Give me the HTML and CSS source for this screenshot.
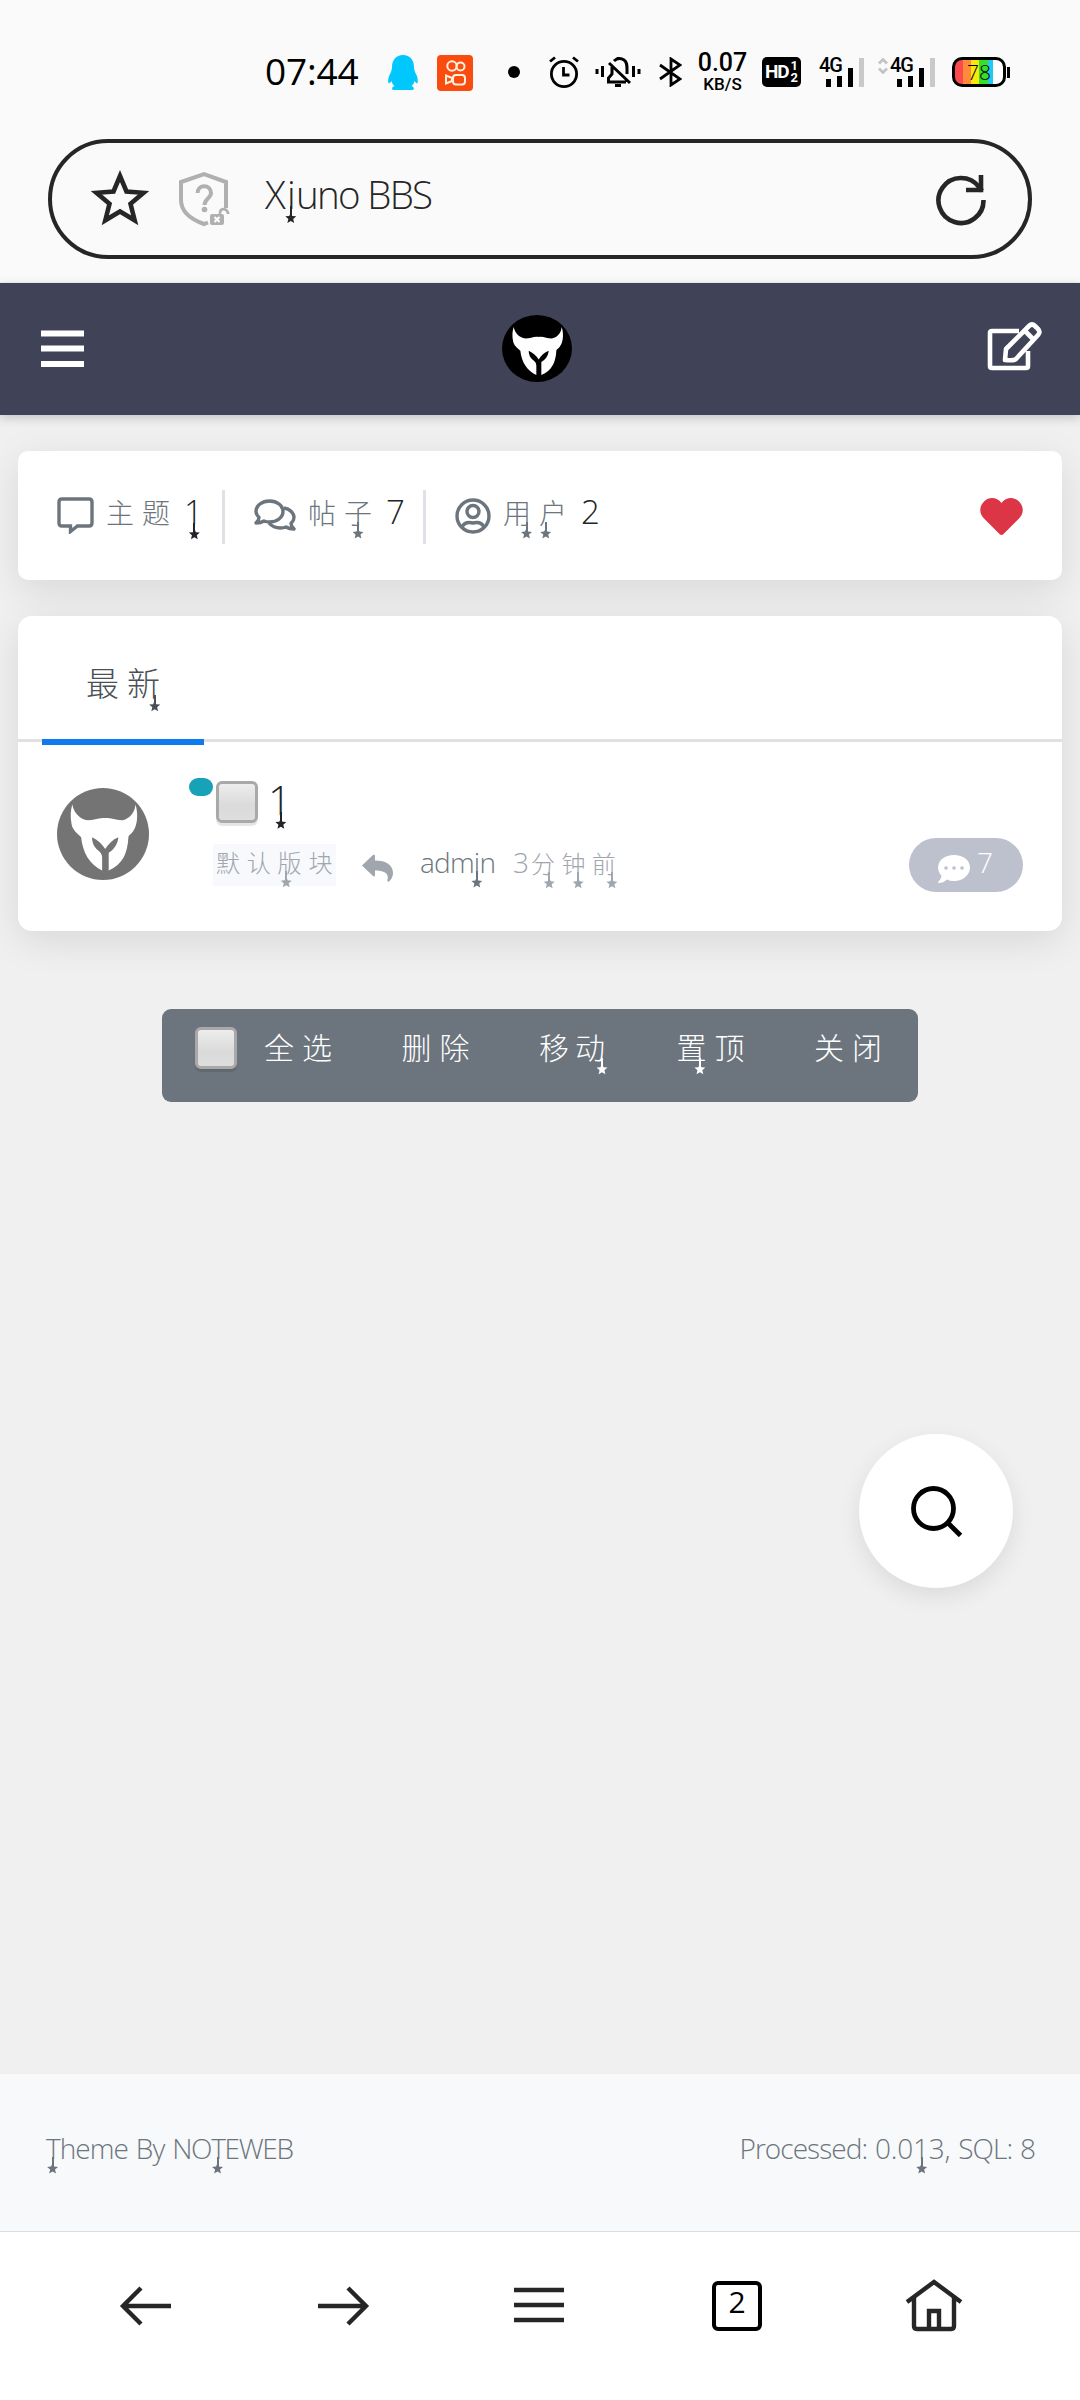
FILE: index.html
```html
<!DOCTYPE html>
<html lang="zh-CN">
<head>
<meta charset="utf-8">
<title>Xiuno BBS</title>
<link rel="stylesheet" href="styles.css">
</head>
<body>
<svg class="defs" width="0" height="0">
  <symbol id="mask" viewBox="65 72 210 202" preserveAspectRatio="none">
    <ellipse cx="170" cy="173" rx="105" ry="101"/>
    <path fill="#fff" d="M100 108C104 128 118 140 135 143C150 143 160 136 175 138C190 136 200 143 215 143C232 138 243 125 244 108C250 125 250 150 240 165C236 173 228 176 228 180C226 215 215 240 183 253L183 214C195 207 204 195 205 180C192 185 182 195 175 206C168 195 158 186 145 180C145 192 150 202 158 208Q168 215 168 225L168 253C140 240 124 215 120 180C112 172 100 165 98 150C95 135 96 120 100 108Z"/>
  </symbol>
</svg>

<header class="status">
  <span class="clock">07:44</span>
  <svg class="qq" width="30" height="35" viewBox="0 0 30 35"><path fill="#00c8ff" d="M15 0C8 0 4 5 4 12c0 3-1 5-2.500 8C0 23 0 27 .5 28c1 1 2-1 3-2 .5 2 1.500 4 3 5-3 1-3 4-1 4h19c2 0 2-3-1-4 1.500-1 2.500-3 3-5 1 1 2 3 3 2 .5-1 .5-5-1-8C27 17 26 15 26 12 26 5 22 0 15 0z"/></svg>
  <svg class="ks" width="36" height="36" viewBox="0 0 36 36"><rect width="36" height="36" rx="4" fill="#fb4c10"/><g fill="none" stroke="#fff0e0" stroke-width="2"><circle cx="15" cy="11" r="4.700"/><circle cx="23.500" cy="11.500" r="4"/><rect x="16" y="20" width="12" height="9.500" rx="3"/><path d="M15 23l-6-2.500v8l6-2.500z"/></g></svg>
  <i class="dot"></i>
  <svg class="alarm" width="30" height="32" viewBox="0 0 30 32"><g fill="none" stroke="#000" stroke-width="2.800"><circle cx="15" cy="18" r="12.600"/><path d="M1 5.500L6 1.500M29 5.500L24 1.500M14.500 11v8h6"/></g></svg>
  <svg class="bell" width="46" height="32" viewBox="0 0 46 32"><g fill="none" stroke="#000" stroke-width="3"><path d="M2 13v5M7.500 10v11M44 13v5M38.500 10v11M14 7l21 20M12 26h19M13.500 26v-4l3.500-4v-7M19 5c3-3 7-3 10-1 3 2 3 5 3 9v5M23 1v3"/><path d="M20 29.500h6"/></g></svg>
  <svg class="bt" width="23" height="30" viewBox="0 0 23 30"><path d="M1 8l20 14-9 6V2l9 6L1 22" fill="none" stroke="#000" stroke-width="2.800"/></svg>
  <div class="speed"><b>0.07</b><b class="unit">KB/S</b></div>
  <div class="hd"><span>HD</span><span class="frac"><i>1</i><i>2</i></span></div>
  <div class="sig"><b>4G</b><svg width="39" height="31" viewBox="0 0 39 31"><path d="M3.500 22v8M14.500 19v11M25.500 11v19" stroke="#000" stroke-width="5"/><path d="M36.500 1v29" stroke="#c9c9c9" stroke-width="5"/></svg></div>
  <svg class="updown" width="10" height="16" viewBox="0 0 10 16"><path d="M1 5.500l4-4 4 4M1 10.500l4 4 4-4" fill="none" stroke="#c4c4c4" stroke-width="2.800"/></svg>
  <div class="sig sig2"><b>4G</b><svg width="39" height="31" viewBox="0 0 39 31"><path d="M3.500 22v8M14.500 19v11M25.500 11v19" stroke="#000" stroke-width="5"/><path d="M36.500 1v29" stroke="#c9c9c9" stroke-width="5"/></svg></div>
  <div class="battery"><span>78</span></div><i class="nub"></i>
</header>

<div class="address">
  <svg class="fav" width="58" height="56" viewBox="0 0 58 56"><path d="M29 6l6.500 15.500 17 1.300-13 11 4.200 16.500L29 41.500 14.300 50.300l4.200-16.500-13-11 17-1.300z" fill="none" stroke="#262626" stroke-width="4.600"/></svg>
  <svg class="shield" width="52" height="56" viewBox="0 0 52 56"><g fill="none" stroke="#b0b0b0" stroke-width="4"><path d="M48 37V11L26 3 3 11v18c0 12 9 19 23 24l4-1.500"/><path d="M19.500 22c0-9 13.500-9 13.500 0 0 5-6.500 6-6.500 12"/><path stroke-width="2.800" d="M42 43c-1-7 8-6 8 0"/></g><circle cx="26.500" cy="38.500" r="2.800" fill="#b0b0b0"/><rect x="32" y="43" width="14" height="11" rx="2" fill="#b0b0b0"/><path d="M36.500 46l5 5m0-5l-5 5" stroke="#fff" stroke-width="2"/></svg>
  <span class="title">X<span class="drop m-i">i</span>uno BBS</span>
  <svg class="reload" width="52" height="52" viewBox="0 0 52 52"><g fill="none" stroke="#262626" stroke-width="4.600"><path d="M47.500 26A22.500 22.500 0 1 1 43 13l3 4"/><path d="M30 16h15V1"/></g></svg>
</div>

<nav class="navbar">
  <svg width="44" height="39" viewBox="0 0 44 39"><path d="M0 3.500h43M0 18.500h43M0 34h43" stroke="#fff" stroke-width="6"/></svg>
  <svg class="logo" width="70" height="67"><use href="#mask"/></svg>
  <svg class="edit" width="56" height="50" viewBox="0 0 56 50"><g fill="none" stroke="#fff" stroke-width="4.600" stroke-linejoin="round"><path d="M32 9H5Q3 9 3 11V44Q3 46 5 46H39Q41 46 41 44V29"/><path d="M18 38l1-11L42 4q3-3 6 0l3 3q3 3 0 6L29 37q-2 2-11 1z M38 9l8 8"/></g></svg>
</nav>

<main>
  <section class="card stats">
    <svg class="ic1" width="37" height="38" viewBox="0 0 37 38"><path d="M5 3h27q3 0 3 3v21q0 3-3 3H20.500l-7 5.500V30H5q-3 0-3-3V6q0-3 3-3z" fill="none" stroke="#6c757d" stroke-width="3.400"/></svg>
    <span class="stat s1"><span class="cjk">主题</span><em><span class="drop m-1">1</span></em></span>
    <i class="rule"></i>
    <svg class="ic2" width="42" height="33" viewBox="0 0 42 33"><g fill="none" stroke="#6c757d" stroke-width="3.400" stroke-linejoin="round"><path d="M15.500 2C23 2 29 6.500 29 12.500S23 23 15.500 23q-3 0-5.500-1-3 2-8 2 3-3 3-5.500-3-3-3-6C2 6.500 8 2 15.500 2z"/><path d="M30 9c6 1 10 5 10 9.500q0 3-3 6 0 2.500 3 5.500-5 0-8-2-2.500 1-5.500 1c-5 0-9-2-11.500-5"/></g></svg>
    <span class="stat s2"><span class="cjk">帖<span class="drop m-zi">子</span></span><em>7</em></span>
    <i class="rule"></i>
    <svg class="ic3" width="36" height="36" viewBox="0 0 36 36"><g fill="none" stroke="#6c757d" stroke-width="3.400"><circle cx="18" cy="18" r="16"/><circle cx="18" cy="13.500" r="6"/><path d="M7 29q3-6 11-4 8-2 11 4"/></g></svg>
    <span class="stat s3"><span class="cjk"><span class="drop m-yong">用</span><span class="drop m-hu">户</span></span><em>2</em></span>
    <svg class="heart" width="43" height="37" viewBox="0 0 43 37"><path fill="#dc3545" d="M21.500 5C17-1 9-1.500 4 3.500c-5 5-5 12 0 17L19.500 36q2 2 4 0L39 20.500c5-5 5-12 0-17C34-1.500 26-1 21.500 5z"/></svg>
  </section>

  <section class="card list">
    <div class="tabs"><a class="tab">最<span class="drop m-xin">新</span></a></div>
    <article class="thread">
      <svg class="avatar" width="92" height="92"><use href="#mask" width="92" height="92"/></svg>
      <div class="body">
        <div class="subject"><i class="badge-dot"></i><i class="check"></i><span class="name"><span class="drop m-1">1</span></span></div>
        <div class="meta">
          <span class="forum">默认<span class="drop m-ban">版</span>块</span>
          <svg class="reply" width="31" height="28" viewBox="0 0 31 28"><path fill="#9fa6ad" d="M0 11.500L11 1q2-1.500 2 1v4.500c11 0 18 4 18 13 0 3-2 6.500-4 8-1.500.5-2-.5-1.500-2 1.500-6-3-9-12.500-9V21q0 2.500-2 1z"/></svg>
          <span class="user">adm<span class="drop m-i">i</span>n</span>
          <span class="time">3<span class="drop m-fen">分</span><span class="drop m-zhong">钟</span><span class="drop m-qian">前</span></span>
        </div>
      </div>
      <span class="count"><svg width="32" height="28" viewBox="0 0 32 28"><path fill="#fff" d="M16 0c9 0 16 5 16 12.500S25 26 16 26q-4 0-7-1.500Q5 28 .5 28q-1-.5 0-1.500 2.500-2 3-5.500Q0 17 0 13C0 5 7 0 16 0z"/><path stroke="#bdc1cd" stroke-width="3.600" stroke-linecap="round" d="M8 13h0M16 13h0M24 13h0"/></svg>7</span>
    </article>
  </section>

  <div class="tools">
    <i class="check"></i>
    <a>全选</a><a>删除</a><a>移<span class="drop m-dong">动</span></a><a><span class="drop m-zhi">置</span>顶</a><a>关闭</a>
  </div>
</main>

<button class="fab"><svg width="52" height="52" viewBox="0 0 52 52"><g fill="none" stroke="#000" stroke-width="4.800"><circle cx="23.500" cy="23.500" r="20"/><path d="M38 38l12.500 12.500"/></g></svg></button>

<footer class="foot">
  <span class="by"><span class="drop m-t">T</span>heme By <span class="caps">NO<span class="drop m-t">T</span>EWEB</span></span>
  <span class="sql">Processed: <span class="num">0.0<span class="drop m-1">1</span>3,</span> SQL: 8</span>
</footer>

<nav class="bottom">
  <svg width="58" height="54" viewBox="0 0 58 54"><path d="M54 27H7M24 9L6 27l18 18" fill="none" stroke="#262626" stroke-width="4.400"/></svg>
  <svg width="58" height="54" viewBox="0 0 58 54"><path d="M4 27h47M34 9l18 18-18 18" fill="none" stroke="#262626" stroke-width="4.400"/></svg>
  <svg width="58" height="54" viewBox="0 0 58 54"><path d="M3 11h50M3 26h50M3 41h50" fill="none" stroke="#262626" stroke-width="4.400"/></svg>
  <span class="pages">2</span>
  <svg width="58" height="54" viewBox="0 0 58 54"><g fill="none" stroke="#262626" stroke-width="4.400"><path d="M2 23L29 3l27 20M9 19v28q0 3 3 3h34q3 0 3-3V19"/><path d="M24 50V32h10v18"/></g></svg>
</nav>
</body>
</html>
```
FILE: styles.css
```css
* { box-sizing: border-box; }
body {
  margin: 0; width: 1080px; height: 2400px; overflow: hidden;
  display: flex; flex-direction: column;
  background: #f0f0f0;
  font-family: "Open Sans", "Noto Sans CJK SC", sans-serif;
  font-weight: 300;
}
i, em { font-style: normal; }
svg { flex: none; display: block; }
.defs { position: absolute; }

/* letters with a long stem ending in a small star */
.drop { position: relative; display: inline-block; --x: 50%; }
.drop::before, .drop::after { content: ""; position: absolute; background: currentColor; left: var(--x); }
.drop::before { width: 2px; height: 9px; margin-left: -1px; top: calc(50% + .32em); }
.drop::after {
  width: 11px; height: 11px; margin-left: -5.500px; top: calc(50% + .32em + 6px);
  clip-path: polygon(50% 0, 64% 33%, 100% 36%, 72% 60%, 81% 97%, 50% 78%, 19% 97%, 28% 60%, 0 36%, 36% 33%);
}
.m-1 { --x: 55%; }
.m-i { --x: 54%; }
.m-t { --x: 48%; }
.m-zi { --x: .5em; }
.m-yong { --x: .84em; }
.m-hu { --x: .24em; }
.m-xin { --x: .84em; }
.m-ban { --x: .36em; }
.m-fen { --x: .76em; }
.m-zhong { --x: .7em; }
.m-qian { --x: .84em; }
.m-dong { --x: .9em; }
.m-zhi { --x: .78em; }

.status { display: flex; height: 139px; padding-left: 265px; background: #fafafa; flex: none; align-items: flex-start; }
.clock { font: 400 37px/50px "Open Sans", sans-serif; width: 98px; margin-top: 46px; letter-spacing: -.2px; }
.qq { margin: 55px 0 0 25px; }
.ks { margin: 55px 0 0 19px; }
.dot { width: 12px; height: 12px; border-radius: 50%; background: #000; margin: 66px 0 0 35px; }
.alarm { margin: 56px 0 0 29px; }
.bell { margin: 56px 0 0 16px; }
.bt { margin: 57px 0 0 18px; }
.speed { width: 53px; margin: 48px 0 0 14px; text-align: center; font-family: Roboto, sans-serif; }
.speed b { display: block; font-weight: 500; font-size: 25px; line-height: 29px; }
.speed .unit { font-size: 17px; line-height: 19px; margin-top: -2px; }
.hd { display: flex; width: 39px; height: 30px; margin: 57px 0 0 13px; padding-left: 3px; border-radius: 5px; background: #000; color: #fff; font: 700 19px/30px Roboto, sans-serif; letter-spacing: -1.200px; }
.frac { display: flex; flex-direction: column; font-size: 13px; margin-left: 2px; padding-top: 3px; }
.frac i { height: 12px; line-height: 12px; }
.sig { width: 44px; height: 32px; margin: 57px 0 0 18px; display: grid; }
.sig > * { grid-area: 1 / 1; }
.sig b { font: 500 20px/17px Roboto, sans-serif; letter-spacing: -1px; }
.sig svg { margin: 0 0 0 6px; }
.updown { margin: 58px 0 0 15px; }
.sig2 { margin-left: 2px; }
.battery { width: 54px; height: 30px; margin: 57px 0 0 18px; border: 3px solid #000; border-radius: 10px; text-align: center; font: 300 21px/24px "Open Sans", sans-serif; background: linear-gradient(90deg, #fb4a4a 0 8px, #ff8a3c 8px 16px, #fbe710 16px 24px, #35e02a 24px 33px, #25c8f0 33px 38px, #fff 38px); }
.nub { width: 3px; height: 11px; margin: 67px 0 0 1px; background: #000; }

.address { flex: none; display: flex; align-items: flex-start; width: 984px; height: 120px; margin: 0 48px; border: 4px solid #262626; border-radius: 60px; background: #fafafa; box-shadow: 0 0 0 100px #fafafa; clip-path: inset(0 -48px -23px -48px); }
.fav { margin: 27px 0 0 39px; }
.shield { margin: 28px 0 0 29px; }
.title { flex: 1; margin: 26px 0 0 35px; font-size: 38.500px; line-height: 50px; letter-spacing: -1.700px; color: #262626; }
.title .drop { margin: 0 2px 0 3px; }
.reload { margin: 31px 40px 0 0; }

.navbar { flex: none; display: flex; justify-content: space-between; align-items: center; height: 132px; margin-top: 24px; padding: 0 37px 0 41px; background: #404257; box-shadow: 0 3px 10px rgba(0,0,0,.18); position: relative; }
.logo { margin-left: 2px; margin-top: -2px; }
.edit { margin-top: -4px; }

main { flex: 1; padding: 36px 18px 0; }
.card { background: #fff; box-shadow: 0 10px 38px rgba(0,0,0,.1); }
.stats { display: flex; align-items: flex-start; height: 129px; border-radius: 10px; padding: 39px 39px 0; color: #6c757d; }
.ic1 { margin-top: 6px; }
.ic2 { margin: 9px 0 0 29px; }
.ic3 { margin: 8px 0 0 29px; }
.stat { display: flex; line-height: 42px; font-size: 33px; margin-left: 13px; }
.stat .cjk { font-size: 28px; letter-spacing: 8px; width: 78px; padding-top: 2px; line-height: 42px; margin-left: -1px; }
.stat em { color: #212529; padding-top: 1px; }
.s1 { width: 115px; } .s2 { width: 114px; } .s3 { width: 100px; }
.rule { width: 3px; height: 54px; background: #dee2e6; }
.heart { margin: 8px 0 0 auto; }

.list { height: 315px; margin-top: 36px; border-radius: 14px; }
.tabs { height: 126px; padding-left: 24px; border-bottom: 3px solid #dfe1e3; }
.tab { display: block; width: 162px; height: 129px; padding: 38px 0 0 44px; border-bottom: 6px solid #0d7aed; color: #495057; font-size: 33px; line-height: 60px; letter-spacing: 8px; white-space: nowrap; }
.thread { display: flex; padding: 46px 39px 0; }
.avatar { opacity: .54; }
.body { flex: 1; margin-left: 40px; margin-top: -10px; }
.subject { display: flex; align-items: flex-start; height: 66px; }
.badge-dot { width: 24px; height: 18px; border-radius: 9px; background: #17a2b8; }
.check { flex: none; width: 42px; height: 42px; border: 3px solid #a9a9a9; border-radius: 6px; background: linear-gradient(#ededed, #dadada 60%, #dedede); box-shadow: 0 3px 1px rgba(0,0,0,.1); }
.subject .check { margin: 3px 0 0 3px; }
.name { margin: -4px 0 0 10px; font-size: 41px; line-height: 50px; color: #212529; }
.meta { display: flex; align-items: flex-start; margin-left: 24px; font-size: 28px; line-height: 42px; color: #9fa6ad; }
.forum { width: 123px; height: 42px; padding-left: 3px; background: #f8f9fc; font-size: 24px; line-height: 38px; letter-spacing: 6.800px; white-space: nowrap; }
.reply { margin: 10px 0 0 26px; }
.user { width: 93px; margin: -3px 0 0 27px; color: #6c757d; letter-spacing: -.8px; }
.time { margin-top: -3px; white-space: nowrap; }
.time .drop { font-size: 24px; letter-spacing: 6px; margin-left: .4px; }
.time .m-fen { margin-left: 2px; }
.count { display: flex; width: 114px; height: 54px; margin-top: 50px; padding: 0 0 0 29px; border-radius: 27px; background: #bdc1cd; color: #fff; font-size: 28px; line-height: 48px; }
.count svg { margin: 17px 7px 0 0; }

.tools { display: flex; width: 756px; height: 93px; margin: 78px auto 0; padding: 18px 0 0 33px; border-radius: 9px; background: #6c757d; color: #fff; }
.tools .check { margin-right: 27px; }
.tools a { flex: none; width: 137.500px; font-size: 30px; line-height: 42px; letter-spacing: 8px; }
.tools .m-dong { margin-left: -2px; }

.fab { position: absolute; left: 859px; top: 1434px; width: 154px; height: 154px; padding: 0; border: 0; border-radius: 50%; background: #fff; box-shadow: 0 8px 24px rgba(0,0,0,.09); display: grid; place-items: center; }

.foot { flex: none; display: flex; justify-content: space-between; height: 157px; padding: 50px 45px 0 46px; background: #f8f9fb; color: #6c757d; font-size: 28px; line-height: 48px; letter-spacing: -.95px; word-spacing: 1.500px; }
.caps { letter-spacing: -1.300px; }
.num { letter-spacing: -.2px; }
.bottom { flex: none; display: flex; justify-content: space-between; height: 169px; padding: 47px 117px 0; border-top: 1px solid #dcdcdc; background: #fff; }
.pages { width: 50px; height: 50px; margin: 2px 4px; border: 4px solid #000; border-radius: 6px; font: 400 30px/34px "Open Sans", sans-serif; text-align: center; }
```
